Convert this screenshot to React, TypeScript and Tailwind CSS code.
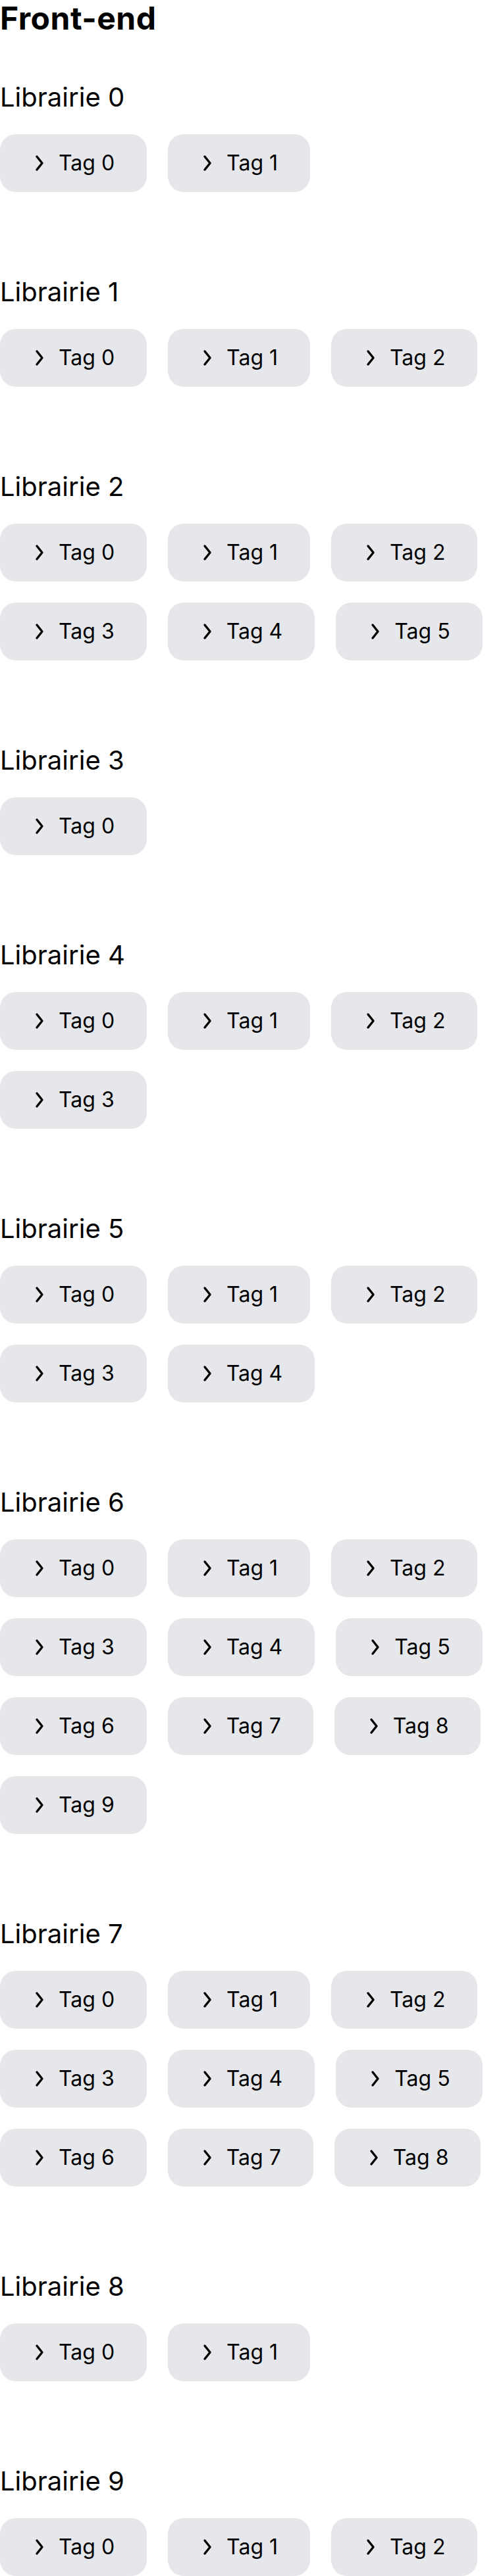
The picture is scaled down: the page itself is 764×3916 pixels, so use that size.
import React from "react";

const libs: number[] = [2, 3, 6, 1, 4, 5, 10, 9, 2, 3];

function Chevron() {
  return (
    <svg width="12" height="24" viewBox="0 0 12 24" fill="none" className="shrink-0 overflow-visible">
      <polyline points="2,2 10,12 2,22" stroke="#000" strokeWidth="3.4" strokeLinecap="round" strokeLinejoin="round" />
    </svg>
  );
}

function Tag({ label }: { label: string }) {
  return (
    <button className="flex h-[88px] items-center gap-[23px] rounded-[24px] bg-[#e5e7eb] pl-[54px] pr-[49px] text-[32px] leading-[48px] text-black">
      <Chevron />
      <span>{label}</span>
    </button>
  );
}

export default function App() {
  return (
    <div className="bg-white text-black" style={{ fontFamily: "Inter, 'Noto Sans', sans-serif" }}>
      <h1 className="text-[48px] font-bold leading-[56px] tracking-[0.5px]">Front-end</h1>
      <div className="mt-[64px] flex flex-col gap-[124px]">
        {libs.map((count, i) => (
          <section key={i}>
            <h2 className="text-[40px] font-normal leading-[56px]">Librairie {i}</h2>
            <div className="mt-[28px] flex flex-wrap gap-[32px]">
              {Array.from({ length: count }).map((_, j) => (
                <Tag key={j} label={`Tag ${j}`} />
              ))}
            </div>
          </section>
        ))}
      </div>
    </div>
  );
}
